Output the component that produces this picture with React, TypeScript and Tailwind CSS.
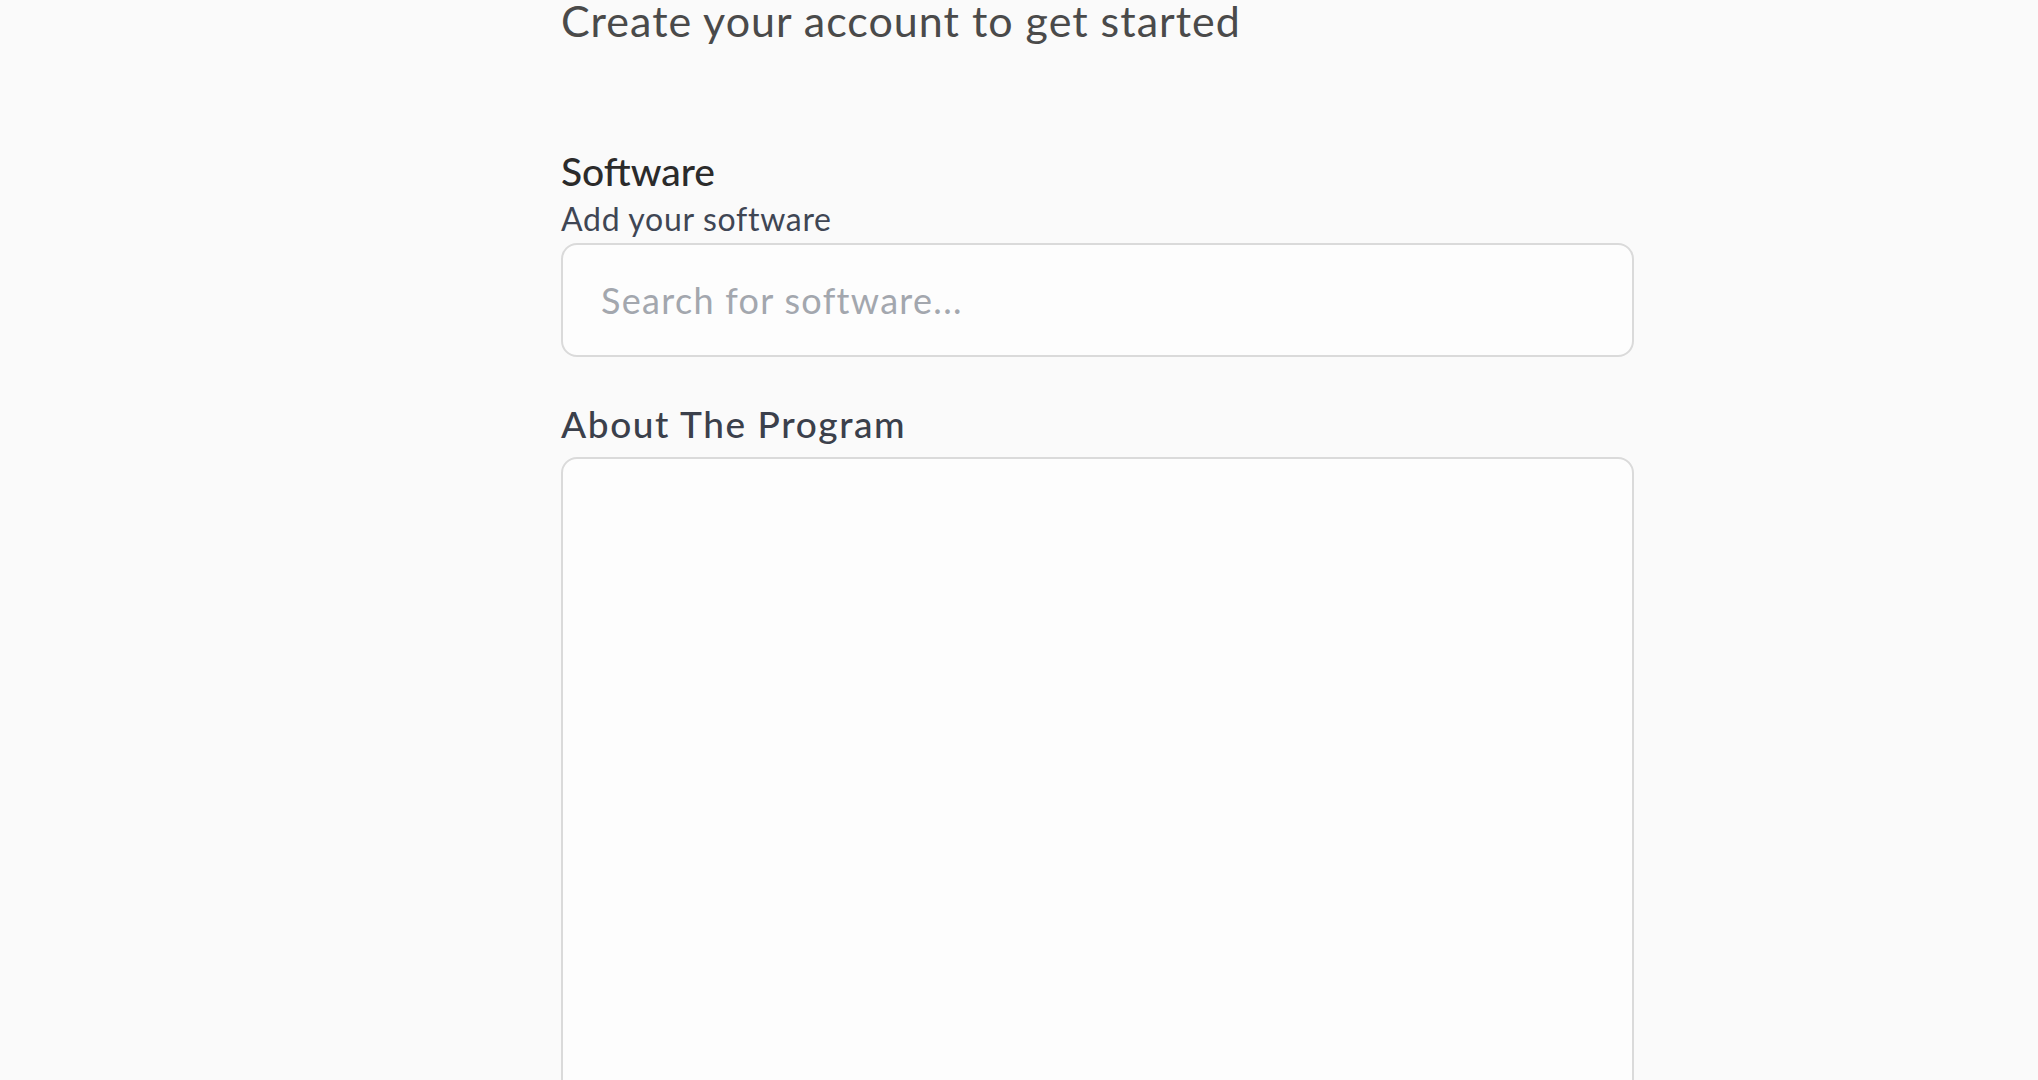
export default function App() {
  return (
    <div className="min-h-screen bg-[#fafafa] overflow-hidden" style={{ fontFamily: 'Lato, "Noto Sans", sans-serif' }}>
      <div className="ml-[561px] w-[1073px] flex flex-col">
        <h1 className="-mt-[1px] text-[43px] leading-[43px] font-normal tracking-[1px] text-[#4a4a4a]">
          Create your account to get started
        </h1>

        {/* Software */}
        <div className="mt-[109px] flex flex-col">
          <label className="text-[39px] leading-[40px] font-medium text-[#2b2b2b]">Software</label>
          <span className="mt-[10px] text-[32px] leading-[36px] tracking-[0.7px] text-[#3f4654]">Add your software</span>
          <input
            type="text"
            placeholder="Search for software..."
            className="mt-[6px] h-[114px] w-full rounded-[16px] border-2 border-[#dadada] bg-[#fdfdfd] px-[38px] text-[36px] tracking-[1.3px] text-[#333] placeholder:text-[#a3a7ae] outline-none"
          />
        </div>

        {/* About */}
        <div className="mt-[47px] flex flex-col">
          <label className="text-[37px] leading-[40px] font-medium tracking-[1.6px] text-[#3b404b]">About The Program</label>
          <textarea className="mt-[13px] h-[700px] w-full rounded-[16px] border-2 border-[#dadada] bg-[#fdfdfd] resize-none outline-none" />
        </div>
      </div>
    </div>
  );
}
